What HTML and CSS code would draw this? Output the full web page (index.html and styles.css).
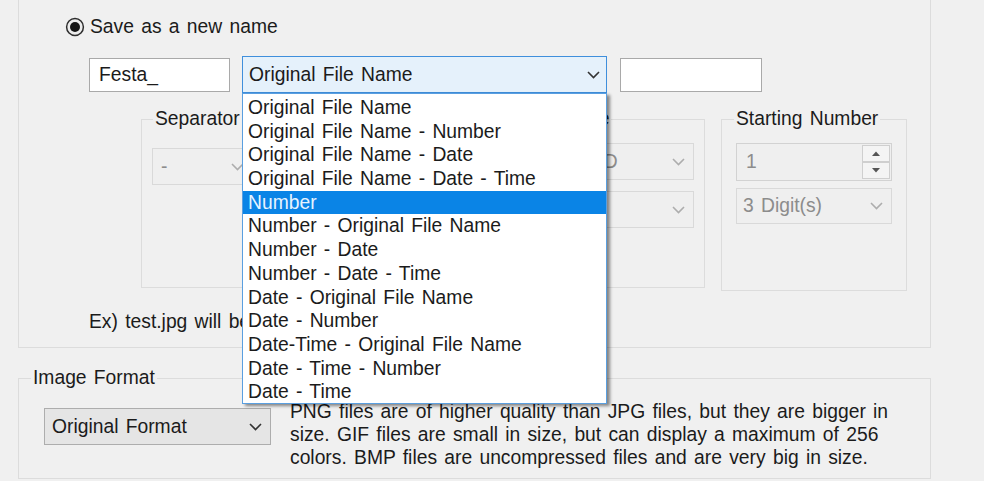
FILE: index.html
```html
<!DOCTYPE html>
<html>
<head>
<meta charset="utf-8">
<link rel="stylesheet" href="styles.css">
</head>
<body>
<div class="naming">
  <div class="radio-row">
    <svg class="radio" width="20" height="20" viewBox="0 0 20 20"><circle cx="10" cy="10" r="8.4" fill="#ececec" stroke="#2e2e2e" stroke-width="1.5"/><circle cx="10" cy="10" r="5" fill="#141414"/></svg>
    <span>Save as a new name</span>
  </div>
  <div class="name-row">
    <div class="textbox">Festa_</div>
    <div class="combo-wrap">
      <div class="combo">
        <span>Original File Name</span>
        <svg class="chev" width="13" height="8" viewBox="0 0 13 8"><path d="M1 1l5.5 5.5L12 1" fill="none" stroke="#333" stroke-width="1.6"/></svg>
      </div>
      <ul class="dropdown">
        <li>Original File Name</li>
        <li>Original File Name - Number</li>
        <li>Original File Name - Date</li>
        <li>Original File Name - Date - Time</li>
        <li class="sel">Number</li>
        <li>Number - Original File Name</li>
        <li>Number - Date</li>
        <li>Number - Date - Time</li>
        <li>Date - Original File Name</li>
        <li>Date - Number</li>
        <li>Date-Time - Original File Name</li>
        <li>Date - Time - Number</li>
        <li>Date - Time</li>
      </ul>
    </div>
    <div class="textbox wide"></div>
  </div>
  <div class="groups">
    <fieldset class="group sep">
      <legend>Separator</legend>
      <div class="select disabled sep-select"><span>-</span><svg class="chev" width="13" height="8" viewBox="0 0 13 8"><path d="M1 1l5.5 5.5L12 1" fill="none" stroke="#adadad" stroke-width="1.6"/></svg></div>
    </fieldset>
    <fieldset class="group date">
      <legend>Date Type</legend>
      <div class="select disabled first"><span>YY-MM-DD</span><svg class="chev" width="13" height="8" viewBox="0 0 13 8"><path d="M1 1l5.5 5.5L12 1" fill="none" stroke="#adadad" stroke-width="1.6"/></svg></div>
      <div class="select disabled second"><span></span><svg class="chev" width="13" height="8" viewBox="0 0 13 8"><path d="M1 1l5.5 5.5L12 1" fill="none" stroke="#adadad" stroke-width="1.6"/></svg></div>
    </fieldset>
    <fieldset class="group start">
      <legend>Starting Number</legend>
      <div class="spin">
        <span class="spin-val">1</span>
        <div class="spin-btns">
          <div class="spin-btn"><svg width="8" height="5" viewBox="0 0 8 5"><path d="M0 5L4 0.5L8 5z" fill="#555"/></svg></div>
          <div class="spin-btn"><svg width="8" height="5" viewBox="0 0 8 5"><path d="M0 0L4 4.5L8 0z" fill="#555"/></svg></div>
        </div>
      </div>
      <div class="select disabled digits"><span>3 Digit(s)</span><svg class="chev" width="13" height="8" viewBox="0 0 13 8"><path d="M1 1l5.5 5.5L12 1" fill="none" stroke="#adadad" stroke-width="1.6"/></svg></div>
    </fieldset>
  </div>
  <p class="example">Ex) test.jpg will be Festa_001.jpg</p>
</div>
<fieldset class="format">
  <legend>Image Format</legend>
  <div class="format-body">
    <div class="select format-select"><span>Original Format</span><svg class="chev" width="13" height="8" viewBox="0 0 13 8"><path d="M1 1l5.5 5.5L12 1" fill="none" stroke="#333" stroke-width="1.6"/></svg></div>
    <p class="desc">
      <span>PNG files are of higher quality than JPG files, but they are bigger in</span>
      <span>size. GIF files are small in size, but can display a maximum of 256</span>
      <span>colors. BMP files are uncompressed files and are very big in size.</span>
    </p>
  </div>
</fieldset>
</body>
</html>
```
FILE: styles.css
```css
* { box-sizing: border-box; }
html, body { margin: 0; }
body {
  background: #f0f0f0;
  font-family: "Liberation Sans", Arial, sans-serif;
  font-size: 19.3px;
  word-spacing: 1.9px;
  color: #1b1b1b;
  width: 984px;
  height: 481px;
  overflow: hidden;
}
.naming {
  margin-left: 18px;
  width: 913px;
  height: 348px;
  padding-top: 16px;
  border: 1px solid #dcdcdc;
  border-top: none;
}
.radio-row {
  display: flex;
  align-items: center;
  gap: 5px;
  height: 22px;
  padding-left: 46px;
}
.radio { display: block; }
.name-row {
  display: flex;
  align-items: center;
  height: 37px;
  margin-top: 18px;
  padding-left: 70px;
}
.textbox {
  width: 141px;
  height: 34px;
  border: 1px solid #a9a9a9;
  background: #fff;
  padding-left: 9px;
  line-height: 32px;
}
.textbox.wide { width: 142px; margin-left: 13px; }
.combo-wrap { position: relative; margin-left: 12px; }
.combo {
  width: 365px;
  height: 37px;
  border: 1px solid #3f8fdc;
  background: #e5f1fb;
  display: flex;
  align-items: center;
  justify-content: space-between;
  padding: 0 6px 0 6px;
}
.chev { display: block; flex: none; }
.dropdown {
  position: absolute;
  left: 0;
  top: 37px;
  width: 365px;
  height: 311px;
  margin: 0;
  padding: 2px 0 0;
  list-style: none;
  background: #fff;
  border: 1px solid #5a9fe0;
  box-shadow: 3px 2px 3px rgba(0, 0, 0, 0.45);
  z-index: 10;
}
.dropdown li {
  line-height: 23.7px;
  height: 23.7px;
  padding-left: 5px;
  white-space: nowrap;
}
.dropdown li.sel { background: #0a84e6; color: #e6f3ff; }
.groups {
  display: flex;
  align-items: flex-start;
  margin-top: 15px;
  padding-left: 122px;
}
fieldset {
  margin: 0;
  min-width: 0;
  border: 1px solid #dcdcdc;
}
legend {
  padding: 0 2px;
  line-height: 22px;
}
.group { padding: 0 10px; }
.group.sep { width: 125px; height: 180px; }
.group.sep legend { margin-left: 1px; }
.group.date { width: 204px; height: 180px; margin-left: 235px; }
.group.date legend { margin-left: 6px; }
.group.start { width: 186px; height: 183px; margin-left: 16px; padding: 0 14px; }
.group.start legend { margin-left: -2px; }
.select {
  display: flex;
  align-items: center;
  justify-content: space-between;
  height: 37px;
  padding: 0 8px 0 8px;
  border: 1px solid #adadad;
  background: #e5e5e5;
}
.select.disabled {
  border-color: #d9d9d9;
  background: #efefef;
  color: #8c8c8c;
}
.sep-select { width: 101px; margin-top: 18px; }
.date .first { margin-top: 13px; }
.date .second { margin-top: 11px; }
.spin {
  display: flex;
  height: 38px;
  margin-top: 13px;
  border: 1px solid #d2d2d2;
  background: #efefef;
}
.spin-val { flex: 1; padding-left: 9px; line-height: 36px; color: #8c8c8c; }
.spin-btns { width: 29px; display: flex; flex-direction: column; padding: 1px 1px 1px 0; }
.spin-btn {
  flex: 1;
  display: flex;
  align-items: center;
  justify-content: center;
  border: 1px solid #cfcfcf;
  background: #f4f4f4;
}
.digits { height: 36px; margin-top: 7px; padding-left: 6px; }
.example {
  margin: 20px 0 0;
  padding-left: 70px;
  line-height: 22px;
}
.format {
  margin: 19px 0 0 18px;
  width: 913px;
  height: 112px;
  padding: 0;
}
.format legend { margin-left: 12px; }
.format-body {
  display: flex;
  align-items: flex-start;
  gap: 19px;
  padding-left: 25px;
}
.format-select { width: 227px; margin-top: 19px; padding-left: 7px; }
.desc { margin: 11px 0 0; line-height: 23px; }
.desc span { display: block; white-space: nowrap; }
```
